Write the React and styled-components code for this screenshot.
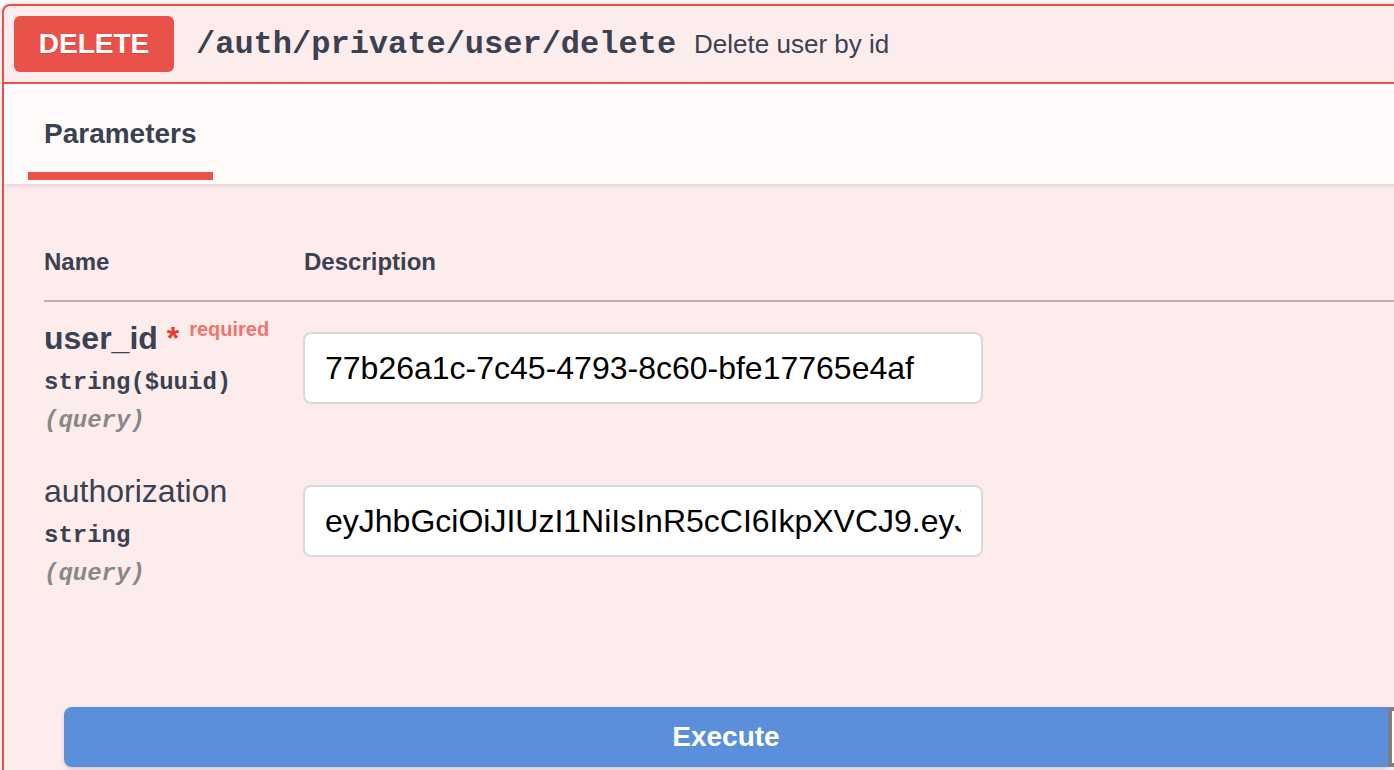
import React from "react";
import styled, { createGlobalStyle } from "styled-components";

const GlobalStyle = createGlobalStyle`
  html, body {
    margin: 0;
    padding: 0;
    background: #ffffff;
    overflow: hidden;
  }
  * {
    box-sizing: border-box;
  }
`;

const sans = `"Liberation Sans", Arial, Helvetica, sans-serif`;
const mono = `"Liberation Mono", "DejaVu Sans Mono", monospace`;

const Pagina = styled.div`
  width: 1394px;
  height: 770px;
  overflow: hidden;
  padding: 4px 0 0 2px;
`;

const Bloco = styled.div`
  width: 1440px;
  min-height: 820px;
  background: #fdecec;
  border: 2px solid #e9514b;
  border-radius: 8px;
  box-shadow: 0 0 6px rgba(0, 0, 0, 0.19);
  font-family: ${sans};
  color: #3b4151;
`;

const Resumo = styled.div`
  display: flex;
  align-items: center;
  height: 78px;
  padding: 0 10px;
  border-bottom: 2px solid #e9514b;
`;

const Metodo = styled.div`
  width: 160px;
  height: 56px;
  display: flex;
  align-items: center;
  justify-content: center;
  background: #e9514b;
  border-radius: 6px;
  color: #ffffff;
  font-size: 28px;
  font-weight: 700;
  text-shadow: 0 1px 0 rgba(0, 0, 0, 0.1);
`;

const Caminho = styled.span`
  margin-left: 22px;
  font-family: ${mono};
  font-size: 32px;
  font-weight: 700;
  color: #3b4151;
`;

const Descricao = styled.span`
  margin-left: 18px;
  font-size: 26px;
  color: #3b4151;
`;

const CabecalhoAbas = styled.div`
  position: relative;
  z-index: 1;
  display: flex;
  height: 100px;
  padding-left: 24px;
  background: rgba(255, 255, 255, 0.8);
  box-shadow: 0 2px 4px rgba(0, 0, 0, 0.1);
`;

const Aba = styled.div`
  height: 96px;
  padding: 36px 16px 0;
  border-bottom: 8px solid ${(p) => (p.$ativa ? "#e9514b" : "transparent")};
  font-size: 28px;
  line-height: 28px;
  font-weight: 700;
  color: #3b4151;
`;

const CorpoParametros = styled.div`
  padding: 40px 0 0 40px;
`;

const LinhaCabecalho = styled.div`
  display: flex;
  border-bottom: 2px solid #b8b0b5;
`;

const Titulo = styled.div`
  width: ${(p) => p.$largura || "auto"};
  padding: 24px 0;
  font-size: 24px;
  line-height: 28px;
  font-weight: 700;
  color: #3b4151;
`;

const LinhaParametro = styled.div`
  display: flex;
  padding: 20px 0;
`;

const ColunaNome = styled.div`
  width: 259px;
  display: flex;
  flex-direction: column;
`;

const NomeParametro = styled.div`
  height: 32px;
  font-size: 32px;
  line-height: 32px;
  font-weight: ${(p) => (p.$obrigatorio ? 700 : 400)};
  color: #3b4151;
  white-space: nowrap;
`;

const Asterisco = styled.span`
  color: #e8382f;
`;

const Obrigatorio = styled.span`
  margin-left: 10px;
  font-size: 20px;
  line-height: 0;
  font-weight: 700;
  color: #f2756d;
  vertical-align: 13px;
`;

const Tipo = styled.div`
  margin-top: 15px;
  font-family: ${mono};
  font-size: 24px;
  line-height: 28px;
  font-weight: 700;
  color: #3b4151;
`;

const Local = styled.div`
  margin-top: 10px;
  font-family: ${mono};
  font-size: 24px;
  line-height: 28px;
  font-weight: 700;
  font-style: italic;
  color: #888888;
`;

const ColunaDescricao = styled.div`
  padding-top: 10px;
`;

const Campo = styled.input`
  width: 680px;
  height: 72px;
  padding: 0 20px;
  border: 2px solid #d9d9d9;
  border-radius: 8px;
  background: #ffffff;
  font-family: ${sans};
  font-size: 32px;
  color: #000000;
  outline: none;
`;

const GrupoBotoes = styled.div`
  display: flex;
  padding: 99px 0 0 60px;
`;

const BotaoExecutar = styled.button`
  flex: 0 0 1324px;
  height: 60px;
  border: none;
  border-radius: 8px 0 0 8px;
  background: #5b8fdb;
  box-shadow: 0 2px 4px rgba(0, 0, 0, 0.15);
  color: #ffffff;
  font-family: ${sans};
  font-size: 28px;
  font-weight: 700;
  cursor: pointer;
`;

const BotaoLimpar = styled.button`
  flex: 0 0 400px;
  height: 60px;
  border: 4px solid #808080;
  border-radius: 0 8px 8px 0;
  background: #ffffff;
`;

const parametros = [
  {
    nome: "user_id",
    obrigatorio: true,
    tipo: "string($uuid)",
    local: "(query)",
    valor: "77b26a1c-7c45-4793-8c60-bfe17765e4af",
  },
  {
    nome: "authorization",
    obrigatorio: false,
    tipo: "string",
    local: "(query)",
    valor:
      "eyJhbGciOiJIUzI1NiIsInR5cCI6IkpXVCJ9.eyJzdWIiOiI3N2IyNmExYy03YzQ1LTQ3OTMtOGM2MC1iZmUxNzc2NWU0YWYifQ",
  },
];

export default function App() {
  return (
    <Pagina>
      <GlobalStyle />
      <Bloco>
        <Resumo>
          <Metodo>DELETE</Metodo>
          <Caminho>/auth/private/user/delete</Caminho>
          <Descricao>Delete user by id</Descricao>
        </Resumo>

        <CabecalhoAbas>
          <Aba $ativa>Parameters</Aba>
        </CabecalhoAbas>

        <CorpoParametros>
          <LinhaCabecalho>
            <Titulo $largura="260px">Name</Titulo>
            <Titulo>Description</Titulo>
          </LinhaCabecalho>

          {parametros.map((p) => (
            <LinhaParametro key={p.nome}>
              <ColunaNome>
                <NomeParametro $obrigatorio={p.obrigatorio}>
                  {p.nome}
                  {p.obrigatorio && (
                    <>
                      <Asterisco>&nbsp;*</Asterisco>
                      <Obrigatorio>required</Obrigatorio>
                    </>
                  )}
                </NomeParametro>
                <Tipo>{p.tipo}</Tipo>
                <Local>{p.local}</Local>
              </ColunaNome>
              <ColunaDescricao>
                <Campo readOnly value={p.valor} />
              </ColunaDescricao>
            </LinhaParametro>
          ))}
        </CorpoParametros>

        <GrupoBotoes>
          <BotaoExecutar>Execute</BotaoExecutar>
          <BotaoLimpar />
        </GrupoBotoes>
      </Bloco>
    </Pagina>
  );
}
